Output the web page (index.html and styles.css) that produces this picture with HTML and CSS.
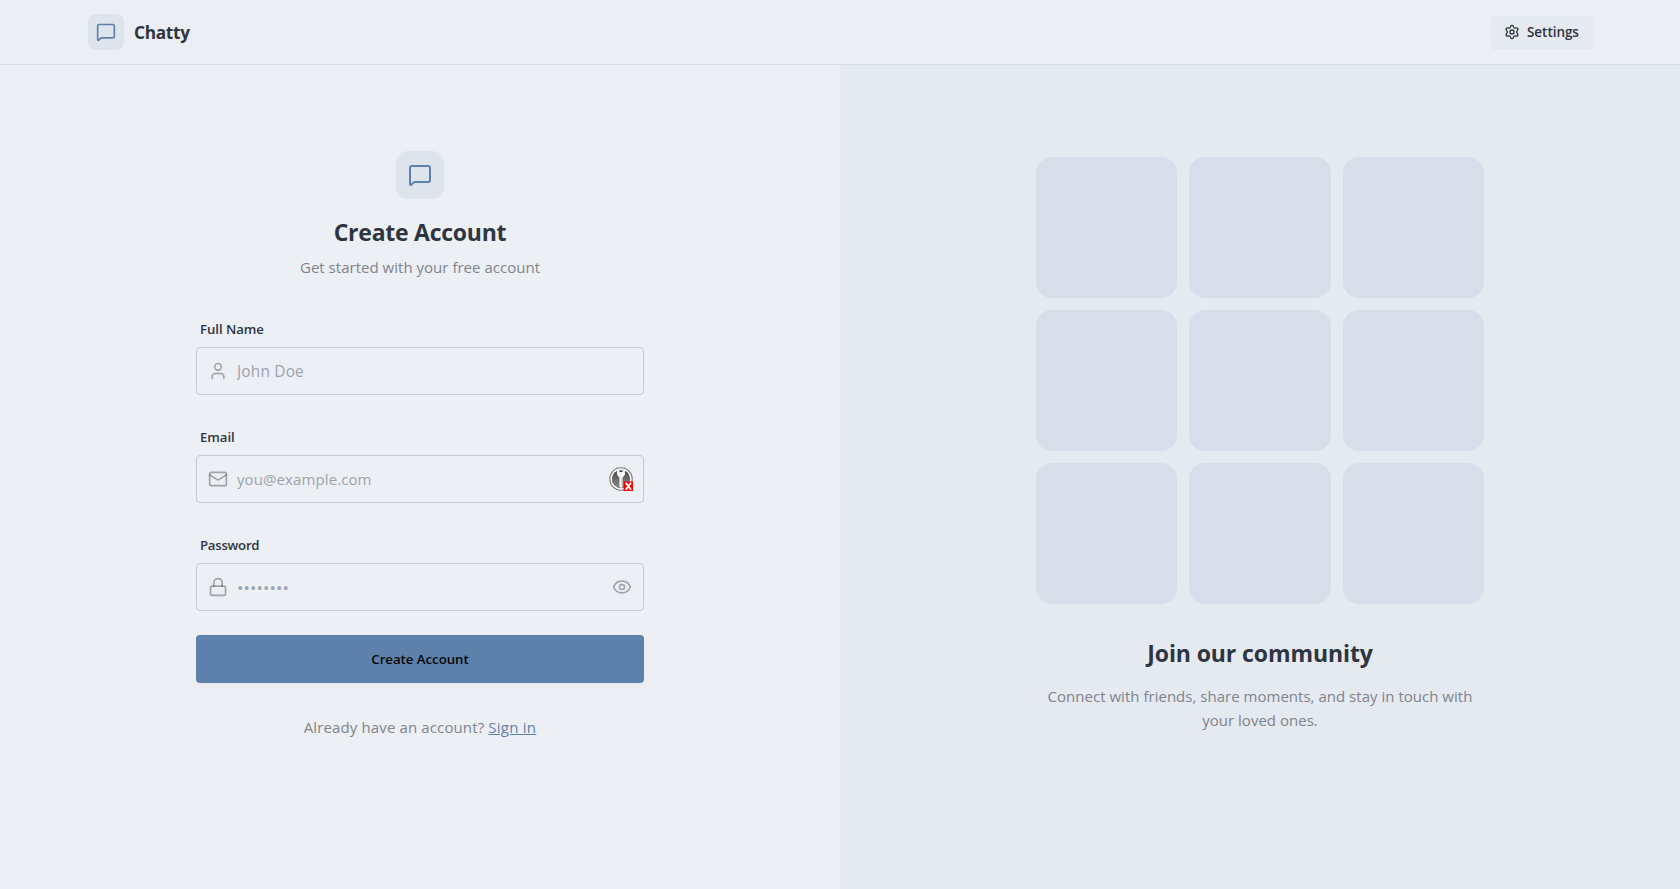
FILE: index.html
```html
<!DOCTYPE html>
<html lang="en">
<head>
<meta charset="utf-8">
<title>Chatty</title>
<link rel="stylesheet" href="styles.css">
</head>
<body>
<header class="navbar">
  <a class="brand" href="#">
    <span class="brand-icon"><svg class="icon icon-20" viewBox="0 0 24 24"><path d="M22 17a2 2 0 0 1-2 2H6.828a2 2 0 0 0-1.414.586l-2.202 2.202A.71.71 0 0 1 2 21.286V5a2 2 0 0 1 2-2h16a2 2 0 0 1 2 2z"/></svg></span>
    <span class="brand-name">Chatty</span>
  </a>
  <a class="settings" href="#">
    <svg class="icon icon-16" viewBox="0 0 24 24"><path d="M9.671 4.136a2.34 2.34 0 0 1 4.659 0 2.34 2.34 0 0 0 3.319 1.915 2.34 2.34 0 0 1 2.33 4.033 2.34 2.34 0 0 0 0 3.831 2.34 2.34 0 0 1-2.33 4.033 2.34 2.34 0 0 0-3.319 1.915 2.34 2.34 0 0 1-4.659 0 2.34 2.34 0 0 0-3.32-1.915 2.34 2.34 0 0 1-2.33-4.033 2.34 2.34 0 0 0 0-3.831A2.34 2.34 0 0 1 6.35 6.051a2.34 2.34 0 0 0 3.319-1.915"/><circle cx="12" cy="12" r="3"/></svg>
    <span class="settings-text">Settings</span>
  </a>
</header>
<main class="page">
  <section class="signup">
    <div class="panel">
      <div class="intro">
        <span class="intro-icon"><svg class="icon icon-24" viewBox="0 0 24 24"><path d="M22 17a2 2 0 0 1-2 2H6.828a2 2 0 0 0-1.414.586l-2.202 2.202A.71.71 0 0 1 2 21.286V5a2 2 0 0 1 2-2h16a2 2 0 0 1 2 2z"/></svg></span>
        <h1 class="title">Create Account</h1>
        <p class="subtitle">Get started with your free account</p>
      </div>
      <form class="form">
        <div class="field">
          <label class="label" for="name">Full Name</label>
          <div class="control">
            <svg class="icon icon-20" viewBox="0 0 24 24"><path d="M19 21v-2a4 4 0 0 0-4-4H9a4 4 0 0 0-4 4v2"/><circle cx="12" cy="7" r="4"/></svg>
            <input class="input input-name" id="name" type="text" placeholder="John Doe">
          </div>
        </div>
        <div class="field">
          <label class="label" for="email">Email</label>
          <div class="control">
            <svg class="icon icon-20" viewBox="0 0 24 24"><path d="m22 7-8.991 5.727a2 2 0 0 1-2.009 0L2 7"/><rect width="20" height="16" x="2" y="4" rx="2"/></svg>
            <input class="input input-email" id="email" type="text" placeholder="you@example.com">
            <svg class="key-badge" viewBox="0 0 24 24">
              <defs><linearGradient id="disc" x1="0" y1="0" x2="0" y2="1"><stop offset="0" stop-color="#484848"/><stop offset="1" stop-color="#8c8c8c"/></linearGradient></defs>
              <circle cx="12" cy="12" r="11.2" fill="#fff" stroke="#777" stroke-width="1.1"/>
              <circle cx="12" cy="12" r="9.2" fill="url(#disc)"/>
              <path d="M8 3.2h8v4.6l-2.4 2.6v9L12 21l-1.6-1.6v-9L8 7.8z" fill="#f6f6f6"/>
              <rect x="10.3" y="3.4" width="3.4" height="1.5" rx=".7" fill="#444"/>
              <path d="M12.7 11v8" stroke="#bbb" stroke-width=".7"/>
              <rect x="14.6" y="14.4" width="9.4" height="9.6" fill="#ff0000"/>
              <path d="m16.8 15.8 5.2 7m0-7-5.2 7" stroke="#fff" stroke-width="1.9"/>
            </svg>
          </div>
        </div>
        <div class="field">
          <label class="label label-password" for="password">Password</label>
          <div class="control">
            <svg class="icon icon-20" viewBox="0 0 24 24"><rect width="18" height="11" x="3" y="11" rx="2"/><path d="M7 11V7a5 5 0 0 1 10 0v4"/></svg>
            <input class="input input-password" id="password" type="password" placeholder="••••••••">
            <svg class="icon icon-20" viewBox="0 0 24 24"><path d="M2.062 12.348a1 1 0 0 1 0-.696 10.75 10.75 0 0 1 19.876 0 1 1 0 0 1 0 .696 10.75 10.75 0 0 1-19.876 0"/><circle cx="12" cy="12" r="3"/></svg>
          </div>
        </div>
        <button class="submit" type="button">Create Account</button>
      </form>
      <p class="signin">Already have an account? <a class="link" href="#">Sign in</a></p>
    </div>
  </section>
  <aside class="community">
    <div class="panel">
      <div class="tiles">
        <div class="tile"></div><div class="tile"></div><div class="tile"></div>
        <div class="tile"></div><div class="tile"></div><div class="tile"></div>
        <div class="tile"></div><div class="tile"></div><div class="tile"></div>
      </div>
      <h2 class="community-title">Join our community</h2>
      <p class="community-text">Connect with friends, share moments, and stay in touch with<br>your loved ones.</p>
    </div>
  </aside>
</main>
</body>
</html>
```
FILE: styles.css
```css
* { box-sizing: border-box; margin: 0; padding: 0; }
body {
  height: 889px;
  display: flex;
  flex-direction: column;
  overflow: hidden;
  background: #eceff4;
  color: #2e3440;
  font: 15px/24px "Open Sans", "Noto Sans", sans-serif;
}
a { color: inherit; text-decoration: none; }
.icon { fill: none; stroke: currentColor; stroke-width: 2; stroke-linecap: round; stroke-linejoin: round; flex: none; }
.icon-16 { width: 16px; height: 16px; }
.icon-20 { width: 20px; height: 20px; }
.icon-24 { width: 24px; height: 24px; }

.navbar {
  height: 65px;
  flex: none;
  display: flex;
  align-items: center;
  justify-content: space-between;
  padding: 0 87px 0 88px;
  border-bottom: 1px solid #d8dee9;
  background: #ebeef3;
}
.brand { display: flex; align-items: center; gap: 10px; }
.brand-icon, .intro-icon { display: flex; align-items: center; justify-content: center; background: #dee4ec; color: #5e81ac; }
.brand-icon { width: 36px; height: 36px; border-radius: 8px; }
.brand-name { padding-top: 1px; font-size: 17.25px; font-weight: 700; line-height: 28px; letter-spacing: -0.3px; }
.settings {
  display: flex;
  align-items: center;
  gap: 7px;
  width: 102px;
  height: 32px;
  padding-left: 13px;
  border-radius: 4px;
  background: #e5e9f0;
  box-shadow: 0 1px 2px rgba(46, 52, 64, .06);
}
.settings-text { font-size: 13.5px; font-weight: 600; white-space: nowrap; letter-spacing: -0.05px; }

.page { flex: 1; display: grid; grid-template-columns: 1fr 1fr; }
.signup, .community { display: flex; justify-content: center; }
.signup { padding-top: 86px; }
.community { padding-top: 91.5px; background: #e5e9f0; }
.panel { width: 448px; white-space: nowrap; }
.intro { display: flex; flex-direction: column; align-items: center; margin-bottom: 32px; }
.intro-icon { width: 48px; height: 48px; border-radius: 12px; margin-bottom: 17px; }
.title, .community-title { font-size: 23px; font-weight: 700; line-height: 32px; letter-spacing: -0.25px; }
.title { margin-bottom: 7px; }
.subtitle, .signin, .community-text { color: #7f848d; }
.subtitle, .community-text { letter-spacing: 0.02px; }

.form { display: flex; flex-direction: column; gap: 24px; }
.label { display: block; padding: 8px 4px; font-size: 13.2px; line-height: 20px; font-weight: 600; letter-spacing: -0.05px; }
.label-password { letter-spacing: -0.25px; }
.control {
  display: flex;
  align-items: center;
  gap: 9px;
  height: 48px;
  padding: 0 11px;
  border: 1px solid #c6cad0;
  border-radius: 4px;
  color: rgba(46, 52, 64, .4);
}
.input { flex: 1; min-width: 0; height: 46px; border: 0; outline: 0; background: none; font: inherit; }
.input::placeholder { color: #9ca3af; opacity: 1; }
.input-name { font-size: 15.4px; letter-spacing: 0.2px; }
.input-email { letter-spacing: 0.1px; }
.input-password { font-size: 17px; letter-spacing: 0.1px; }
.key-badge { width: 24px; height: 24px; flex: none; margin-right: -1px; }
.submit {
  height: 48px;
  border: 0;
  border-radius: 4px;
  background: #5e81ac;
  color: #030609;
  font: 600 13.2px/20px "Open Sans", "Noto Sans", sans-serif;
  box-shadow: 0 1px 2px rgba(46, 52, 64, .05);
}
.signin { margin-top: 32px; text-align: center; letter-spacing: 0.13px; }
.link { color: #5e81ac; text-decoration: underline; letter-spacing: 0.25px; }

.tiles { display: grid; grid-template-columns: repeat(3, 1fr); gap: 12px; margin-bottom: 33px; }
.tile { aspect-ratio: 1; border-radius: 16px; background: #d8dee9; }
.community-title { margin-bottom: 15px; text-align: center; letter-spacing: -0.1px; }
.community-text { text-align: center; }
```
